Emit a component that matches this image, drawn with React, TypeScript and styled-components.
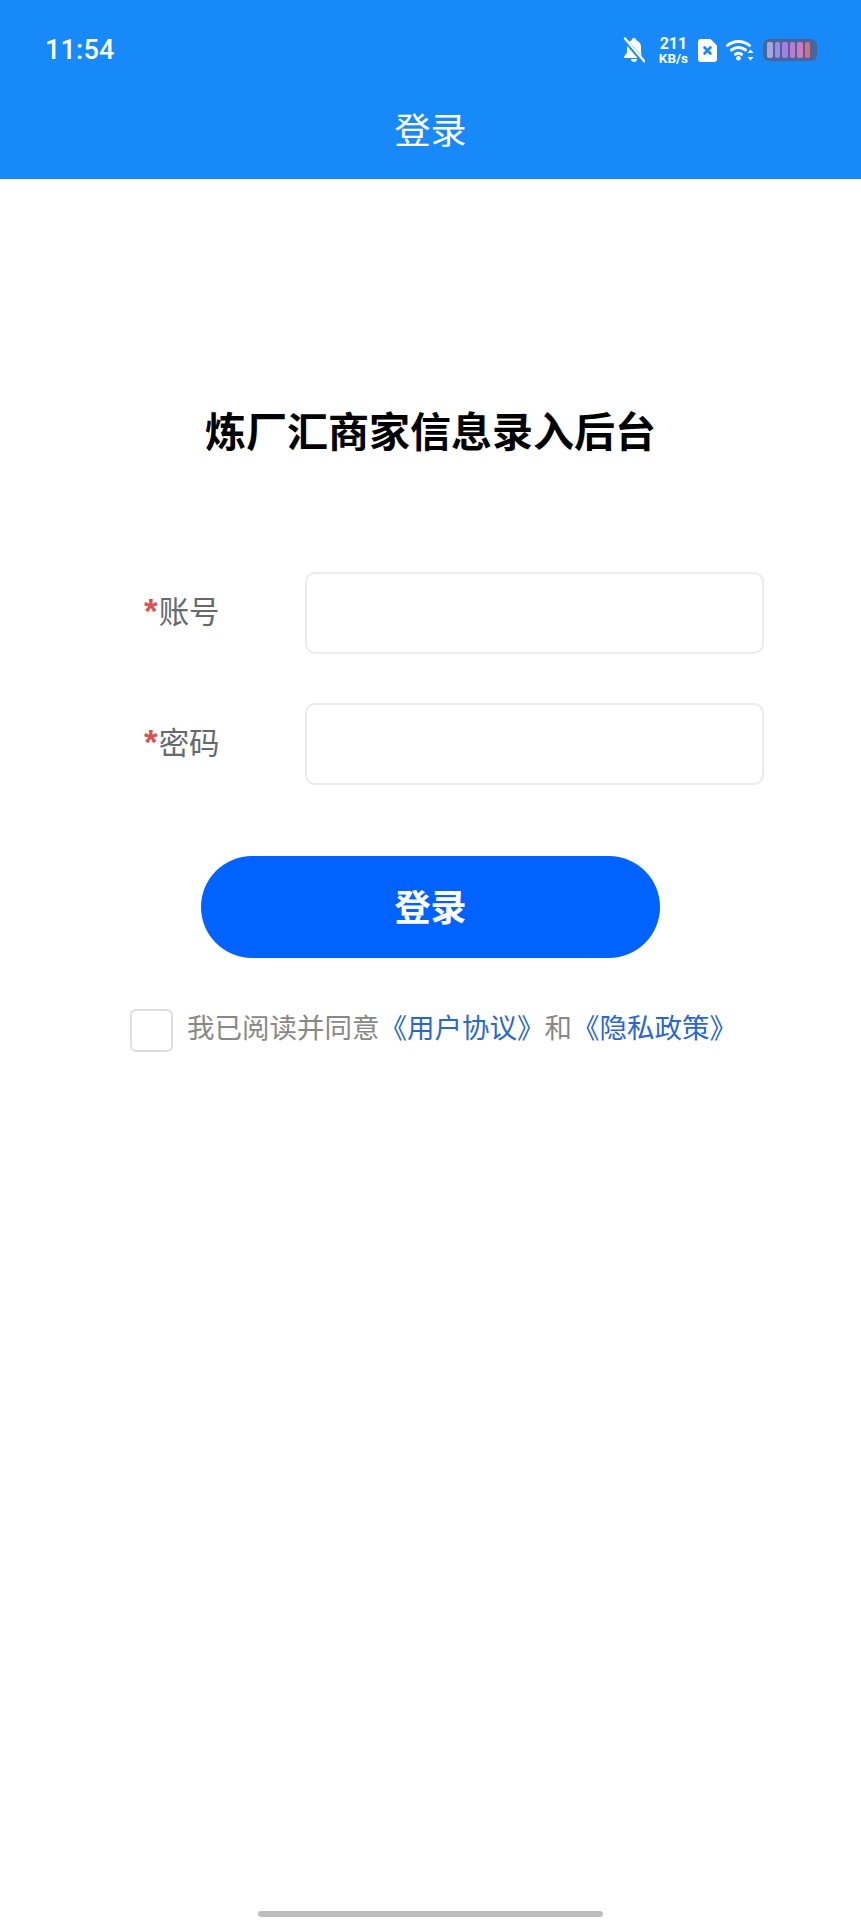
import React from "react";
import styled, { createGlobalStyle } from "styled-components";

const GlobalStyle = createGlobalStyle`
  html, body {
    margin: 0;
    padding: 0;
    background: #fff;
  }
  body {
    font-family: "Noto Sans CJK SC", "Noto Sans", sans-serif;
  }
`;

const Page = styled.div`
  width: 861px;
  height: 1920px;
  display: flex;
  flex-direction: column;
  overflow: hidden;
`;

const Header = styled.header`
  background: #1789f9;
  height: 179px;
  color: #fff;
`;

const StatusBar = styled.div`
  height: 80px;
  padding: 20px 44px 0 45px;
  box-sizing: border-box;
  display: flex;
  align-items: center;
  justify-content: space-between;
`;

const Time = styled.span`
  font-family: Roboto, sans-serif;
  font-weight: 500;
  font-size: 27px;
  letter-spacing: 0.2px;
`;

const StatusIcons = styled.div`
  display: flex;
  align-items: center;
`;

const NetSpeed = styled.div`
  display: flex;
  flex-direction: column;
  align-items: center;
  font-family: Roboto, sans-serif;
  font-weight: 700;
  margin: 0 10px 0 14px;
  line-height: 1;
`;

const SpeedValue = styled.span`
  font-size: 16px;
  line-height: 16px;
`;

const SpeedUnit = styled.span`
  font-size: 13.5px;
  line-height: 13px;
`;

const Icon = styled.svg<{ $gap?: number }>`
  display: block;
  margin-right: ${({ $gap }) => $gap ?? 0}px;
`;

const NavTitle = styled.div`
  height: 99px;
  display: flex;
  align-items: center;
  justify-content: center;
  font-size: 36px;
  padding-bottom: 4px;
  box-sizing: border-box;
`;

const Main = styled.main`
  flex: 1;
  display: flex;
  flex-direction: column;
  align-items: center;
  position: relative;
`;

const Heading = styled.h1`
  margin: 220px 0 0;
  font-size: 41px;
  line-height: 60px;
  font-weight: 700;
  color: #000;
`;

const Form = styled.form`
  margin-top: 113px;
  width: 861px;
  padding: 0 97px 0 144px;
  box-sizing: border-box;
  display: flex;
  flex-direction: column;
  gap: 49px;
`;

const Row = styled.div`
  display: flex;
  align-items: center;
  justify-content: space-between;
`;

const Label = styled.label`
  font-size: 30.5px;
  line-height: 44px;
  color: #666a6e;
  display: flex;
  align-items: center;
  margin-top: -7px;
`;

const Star = styled.span`
  color: #d9534f;
  font-size: 35px;
  line-height: 44px;
  margin: 3px 1px 0 0;
  font-family: "Liberation Sans", sans-serif;
  font-weight: 700;
`;

const Input = styled.input`
  width: 459px;
  height: 82px;
  box-sizing: border-box;
  border: 2px solid #ebebeb;
  border-radius: 10px;
  background: #fff;
  outline: none;
`;

const SubmitButton = styled.button`
  margin-top: 71px;
  width: 459px;
  height: 102px;
  border: none;
  border-radius: 51px;
  background: #0062ff;
  color: #fff;
  font-family: inherit;
  font-size: 36px;
  font-weight: 700;
  padding-bottom: 6px;
`;

const Agreement = styled.div`
  margin-top: 51px;
  width: 861px;
  padding-left: 130px;
  box-sizing: border-box;
  display: flex;
  align-items: center;
  gap: 14px;
`;

const CheckBox = styled.span`
  width: 43px;
  height: 43px;
  box-sizing: border-box;
  border: 2px solid #dedede;
  border-radius: 6px;
  flex: none;
`;

const AgreementText = styled.span`
  font-size: 27.5px;
  line-height: 40px;
  color: #888;
  white-space: nowrap;
  margin-top: -10px;
`;

const LinkText = styled.span`
  color: #2a68d0;
`;

const HomeBar = styled.div`
  position: absolute;
  left: 258px;
  bottom: 3px;
  width: 345px;
  height: 6px;
  border-radius: 3px;
  background: #bdbdbd;
`;

const BellOff = () => (
  <Icon width="22" height="26" viewBox="0 0 22 26" $gap={0}>
    <path
      fill="#fff"
      d="M11 1c-1.400 0-2.200.9-2.300 2.200C5.600 4.200 4 7 4 10v5.600L1.200 19.500v1.600h17.600v-1.600L18 15.600V10c0-3-1.600-5.800-4.700-6.800C13.200 1.900 12.400 1 11 1zM8 22h6c0 1.800-1.300 3-3 3s-3-1.200-3-3z"
    />
    <path d="M1 2 21 25" stroke="#1789f9" strokeWidth="4.500" />
    <path d="M2 1.500 21.500 24.500" stroke="#fff" strokeWidth="2.400" strokeLinecap="round" />
  </Icon>
);

const SimIcon = () => (
  <Icon width="19" height="23" viewBox="0 0 19 23" $gap={9}>
    <path
      fill="#fff"
      d="M3 0h9.500L19 6.500V20a3 3 0 0 1-3 3H3a3 3 0 0 1-3-3V3a3 3 0 0 1 3-3z"
    />
    <path d="M6.500 8.500 12.500 14.500M12.500 8.500 6.500 14.500" stroke="#1789f9" strokeWidth="2.600" strokeLinecap="round" />
  </Icon>
);

const WifiIcon = () => (
  <Icon width="29" height="22" viewBox="0 0 29 22" $gap={8}>
    <g fill="none" stroke="#fff" strokeWidth="3" strokeLinecap="round">
      <path d="M1.500 6.500C7.500 1 17.500 1 23.500 6.500" />
      <path d="M5.500 11C9.500 7.500 15.500 7.500 19.500 11" />
      <path d="M9.500 15.300C11.500 13.800 13.500 13.800 15.500 15.300" />
    </g>
    <circle cx="12.500" cy="19.300" r="2.300" fill="#fff" />
    <path fill="#fff" d="M24.500 10.500l3 3.500h-6zM24.500 21.500l3-3.500h-6z" />
  </Icon>
);

const BatteryShell = styled.div`
  width: 54px;
  height: 22px;
  box-sizing: border-box;
  padding: 3px 4px;
  border-radius: 6px;
  background: #47679c;
  display: flex;
  gap: 2px;
  filter: blur(0.5px);
`;

const BatteryCell = styled.span<{ $color: string }>`
  width: 5.500px;
  border-radius: 2px;
  background: ${({ $color }) => $color};
`;

const batteryColors = ["#a5a8e0", "#9d8be0", "#a57fdc", "#c07ad0", "#d078c0", "#dc6c78"];

const Battery = () => (
  <BatteryShell>
    {batteryColors.map((color) => (
      <BatteryCell key={color} $color={color} />
    ))}
  </BatteryShell>
);

export default function App() {
  return (
    <Page>
      <GlobalStyle />
      <Header>
        <StatusBar>
          <Time>11:54</Time>
          <StatusIcons>
            <BellOff />
            <NetSpeed>
              <SpeedValue>211</SpeedValue>
              <SpeedUnit>KB/s</SpeedUnit>
            </NetSpeed>
            <SimIcon />
            <WifiIcon />
            <Battery />
          </StatusIcons>
        </StatusBar>
        <NavTitle>登录</NavTitle>
      </Header>
      <Main>
        <Heading>炼厂汇商家信息录入后台</Heading>
        <Form>
          <Row>
            <Label>
              <Star>*</Star>账号
            </Label>
            <Input type="text" />
          </Row>
          <Row>
            <Label>
              <Star>*</Star>密码
            </Label>
            <Input type="password" />
          </Row>
        </Form>
        <SubmitButton type="button">登录</SubmitButton>
        <Agreement>
          <CheckBox />
          <AgreementText>
            我已阅读并同意<LinkText>《用户协议》</LinkText>和<LinkText>《隐私政策》</LinkText>
          </AgreementText>
        </Agreement>
        <HomeBar />
      </Main>
    </Page>
  );
}
